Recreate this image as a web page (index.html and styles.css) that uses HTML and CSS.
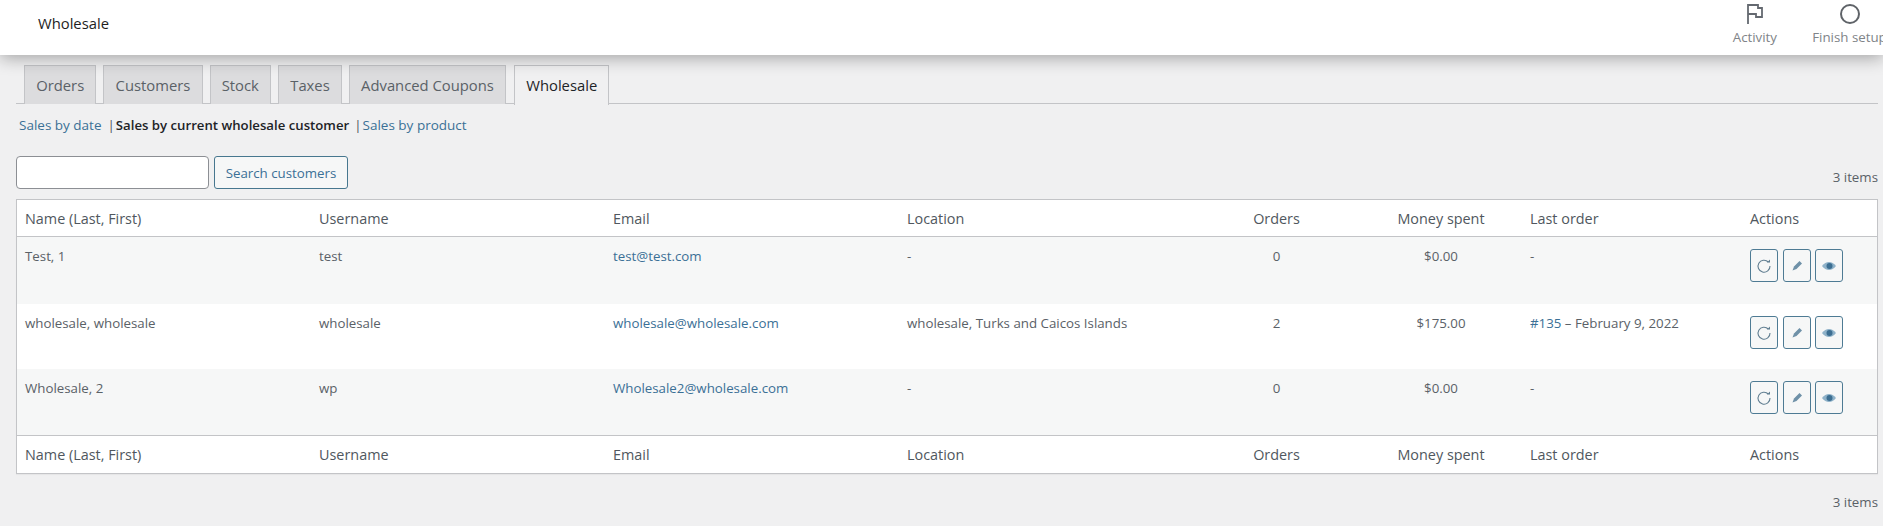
FILE: index.html
```html
<!DOCTYPE html>
<html lang="en">
<head>
<meta charset="utf-8">
<title>Wholesale</title>
<link rel="stylesheet" href="styles.css">
</head>
<body>
<header class="topbar">
  <div class="topbar-title">Wholesale</div>
  <div class="topbar-actions">
    <div class="top-item top-activity">
      <svg class="top-icon" viewBox="0 0 24 24" width="24" height="24"><path d="M5 22V3h10v3h4v9h-6v-3H5" fill="none" stroke="#646970" stroke-width="1.800"/></svg>
      <span>Activity</span>
    </div>
    <div class="top-item top-setup">
      <svg class="top-icon" viewBox="0 0 24 24" width="24" height="24"><circle cx="12" cy="12" r="9" fill="none" stroke="#5f6368" stroke-width="2"/></svg>
      <span>Finish setup</span>
    </div>
  </div>
</header>
<main class="content">
  <nav class="tabs">
    <a class="tab">Orders</a>
    <a class="tab">Customers</a>
    <a class="tab">Stock</a>
    <a class="tab">Taxes</a>
    <a class="tab">Advanced Coupons</a>
    <a class="tab tab-active tab-wide-gap">Wholesale</a>
  </nav>
  <div class="subnav">
    <a class="link">Sales by date</a>
    <span class="sep">|</span>
    <strong class="current">Sales by current wholesale customer</strong>
    <span class="sep sep-b">|</span>
    <a class="link">Sales by product</a>
  </div>
  <div class="toolbar">
    <input class="search" type="text" aria-label="Search customers">
    <button class="search-btn">Search customers</button>
    <span class="count">3 items</span>
  </div>
  <table class="list">
    <colgroup>
      <col class="c-a"><col class="c-a"><col class="c-a"><col class="c-a">
      <col class="c-orders"><col class="c-money"><col class="c-last"><col class="c-actions">
    </colgroup>
    <thead>
      <tr>
        <th>Name (Last, First)</th><th>Username</th><th>Email</th><th>Location</th>
        <th class="mid">Orders</th><th class="mid">Money spent</th><th>Last order</th><th>Actions</th>
      </tr>
    </thead>
    <tbody>
      <tr>
        <td>Test, 1</td><td>test</td><td><a class="link">test@test.com</a></td><td>-</td>
        <td class="mid">0</td><td class="mid">$0.00</td><td>-</td>
        <td class="acts">
          <span class="act"><svg viewBox="0 0 20 20" width="20" height="20"><path d="M14.300 6A6 6 0 1 0 16 10" fill="none" stroke="#5f7d90" stroke-width="1.100"/><path d="M13 6.500h3V3.500z" fill="#5f7d90"/></svg></span>
          <span class="act"><svg viewBox="0 0 20 20" width="20" height="20"><path d="M12.500 5l2.500 2.500L9.500 13l-4 1.500 1.500-4z" fill="#6f91a8"/></svg></span>
          <span class="act"><svg viewBox="0 0 20 20" width="20" height="20"><path d="M3 10c2-2.700 4.500-4 7-4s5 1.300 7 4c-2 2.700-4.500 4-7 4s-5-1.300-7-4z" fill="#8fb2c9"/><circle cx="10.500" cy="10" r="3" fill="#3d6f92"/></svg></span>
        </td>
      </tr>
      <tr>
        <td>wholesale, wholesale</td><td>wholesale</td><td><a class="link">wholesale@wholesale.com</a></td><td>wholesale, Turks and Caicos Islands</td>
        <td class="mid">2</td><td class="mid">$175.00</td><td><a class="link">#135</a> – February 9, 2022</td>
        <td class="acts">
          <span class="act"><svg viewBox="0 0 20 20" width="20" height="20"><path d="M14.300 6A6 6 0 1 0 16 10" fill="none" stroke="#5f7d90" stroke-width="1.100"/><path d="M13 6.500h3V3.500z" fill="#5f7d90"/></svg></span>
          <span class="act"><svg viewBox="0 0 20 20" width="20" height="20"><path d="M12.500 5l2.500 2.500L9.500 13l-4 1.500 1.500-4z" fill="#6f91a8"/></svg></span>
          <span class="act"><svg viewBox="0 0 20 20" width="20" height="20"><path d="M3 10c2-2.700 4.500-4 7-4s5 1.300 7 4c-2 2.700-4.500 4-7 4s-5-1.300-7-4z" fill="#8fb2c9"/><circle cx="10.500" cy="10" r="3" fill="#3d6f92"/></svg></span>
        </td>
      </tr>
      <tr>
        <td>Wholesale, 2</td><td>wp</td><td><a class="link">Wholesale2@wholesale.com</a></td><td>-</td>
        <td class="mid">0</td><td class="mid">$0.00</td><td>-</td>
        <td class="acts">
          <span class="act"><svg viewBox="0 0 20 20" width="20" height="20"><path d="M14.300 6A6 6 0 1 0 16 10" fill="none" stroke="#5f7d90" stroke-width="1.100"/><path d="M13 6.500h3V3.500z" fill="#5f7d90"/></svg></span>
          <span class="act"><svg viewBox="0 0 20 20" width="20" height="20"><path d="M12.500 5l2.500 2.500L9.500 13l-4 1.500 1.500-4z" fill="#6f91a8"/></svg></span>
          <span class="act"><svg viewBox="0 0 20 20" width="20" height="20"><path d="M3 10c2-2.700 4.500-4 7-4s5 1.300 7 4c-2 2.700-4.500 4-7 4s-5-1.300-7-4z" fill="#8fb2c9"/><circle cx="10.500" cy="10" r="3" fill="#3d6f92"/></svg></span>
        </td>
      </tr>
    </tbody>
    <tfoot>
      <tr>
        <th>Name (Last, First)</th><th>Username</th><th>Email</th><th>Location</th>
        <th class="mid">Orders</th><th class="mid">Money spent</th><th>Last order</th><th>Actions</th>
      </tr>
    </tfoot>
  </table>
  <div class="foot-count">3 items</div>
</main>
</body>
</html>
```

FILE: styles.css
```css
* { box-sizing: border-box; }
html, body { margin: 0; height: 100%; overflow: hidden; }
body {
  background: #f0f0f1;
  font-family: "Open Sans", "Noto Sans", sans-serif;
  font-size: 13.3px;
  line-height: 20px;
  color: #5a6167;
}
.topbar {
  height: 55px;
  background: #fff;
  display: flex;
  justify-content: space-between;
  padding-left: 38px;
  box-shadow: 0 3px 16px rgba(0, 0, 0, .32);
  position: relative;
  z-index: 1;
}
.topbar-title { color: #1e1e1e; margin-top: 13px; font-size: 14.800px; }
.topbar-actions { display: flex; margin-right: -7px; }
.top-item {
  display: flex;
  flex-direction: column;
  align-items: center;
  padding-top: 2px;
  color: #808488;
  white-space: nowrap;
}
.top-item span { margin-top: 1px; }
.top-icon { display: block; }
.top-activity { margin-right: 32px; }
.top-setup { width: 81px; }
.content { padding: 10px 5px 0 16px; }
.tabs {
  display: flex;
  height: 39px;
  padding-left: 8px;
  gap: 7px;
  border-bottom: 1px solid #c3c4c7;
}
.tab {
  height: 39px;
  padding: 9px 11.200px 0;
  background: #dcdcde;
  border: 1px solid #c3c4c7;
  border-bottom: 0;
  color: #5a6167;
  font-size: 14.800px;
  font-weight: 500;
}
.tab-wide-gap { margin-left: 1px; }
.tab-active {
  height: 40px;
  background: #f0f0f1;
  color: #1d2327;
}
.subnav { display: flex; margin-top: 11px; padding-left: 3px; height: 20px; }
.link { color: #3b7096; }
.subnav .link { font-size: 13.500px; }
.sep { color: #50575e; margin: 0 1px 0 6px; }
.sep-b { margin-left: 5px; margin-right: 1px; }
.current { color: #1d2327; font-weight: 600; font-size: 13.200px; }
.toolbar { display: flex; align-items: flex-start; margin-top: 21px; height: 43px; }
.search {
  width: 193px;
  height: 33px;
  background: #fff;
  border: 1px solid #8c8f94;
  border-radius: 4px;
}
.search-btn {
  width: 134px;
  height: 33px;
  margin-left: 5px;
  padding: 0;
  background: #f6f7f7;
  border: 1px solid #47778f;
  border-radius: 3px;
  color: #3b7096;
  font: inherit;
}
.count { margin: 11px 0 0 auto; }
.list {
  width: 100%;
  table-layout: fixed;
  border-collapse: separate;
  border-spacing: 0;
  background: #fff;
  border: 1px solid #c3c4c7;
  box-shadow: 0 1px 1px rgba(0, 0, 0, .04);
}
.c-a { width: 294px; }
.c-orders { width: 167px; }
.c-money { width: 162px; }
.c-last { width: 220px; }
.list th {
  height: 37px;
  padding: 1px 8px 0;
  font-size: 14.400px;
  font-weight: 400;
  text-align: left;
  color: #50575e;
}
.list thead th { border-bottom: 1px solid #c3c4c7; }
.list tfoot th { border-top: 1px solid #c3c4c7; height: 38px; }
.list td { height: 66px; padding: 9px 8px 0; vertical-align: top; }
.list tbody tr:nth-child(odd) { background: #f6f7f7; }
.list tbody tr:first-child td { height: 67px; }
.list tbody tr:nth-child(2) td { height: 65px; }
.list .mid { text-align: center; }
.list .acts { padding: 12px 0 0 8px; display: flex; gap: 4.500px; }
.act {
  display: flex;
  align-items: center;
  justify-content: center;
  width: 28px;
  height: 33px;
  background: #f6f7f7;
  border: 1px solid #4e7b94;
  border-radius: 3px;
}
.foot-count { margin-top: 18px; text-align: right; }
```
